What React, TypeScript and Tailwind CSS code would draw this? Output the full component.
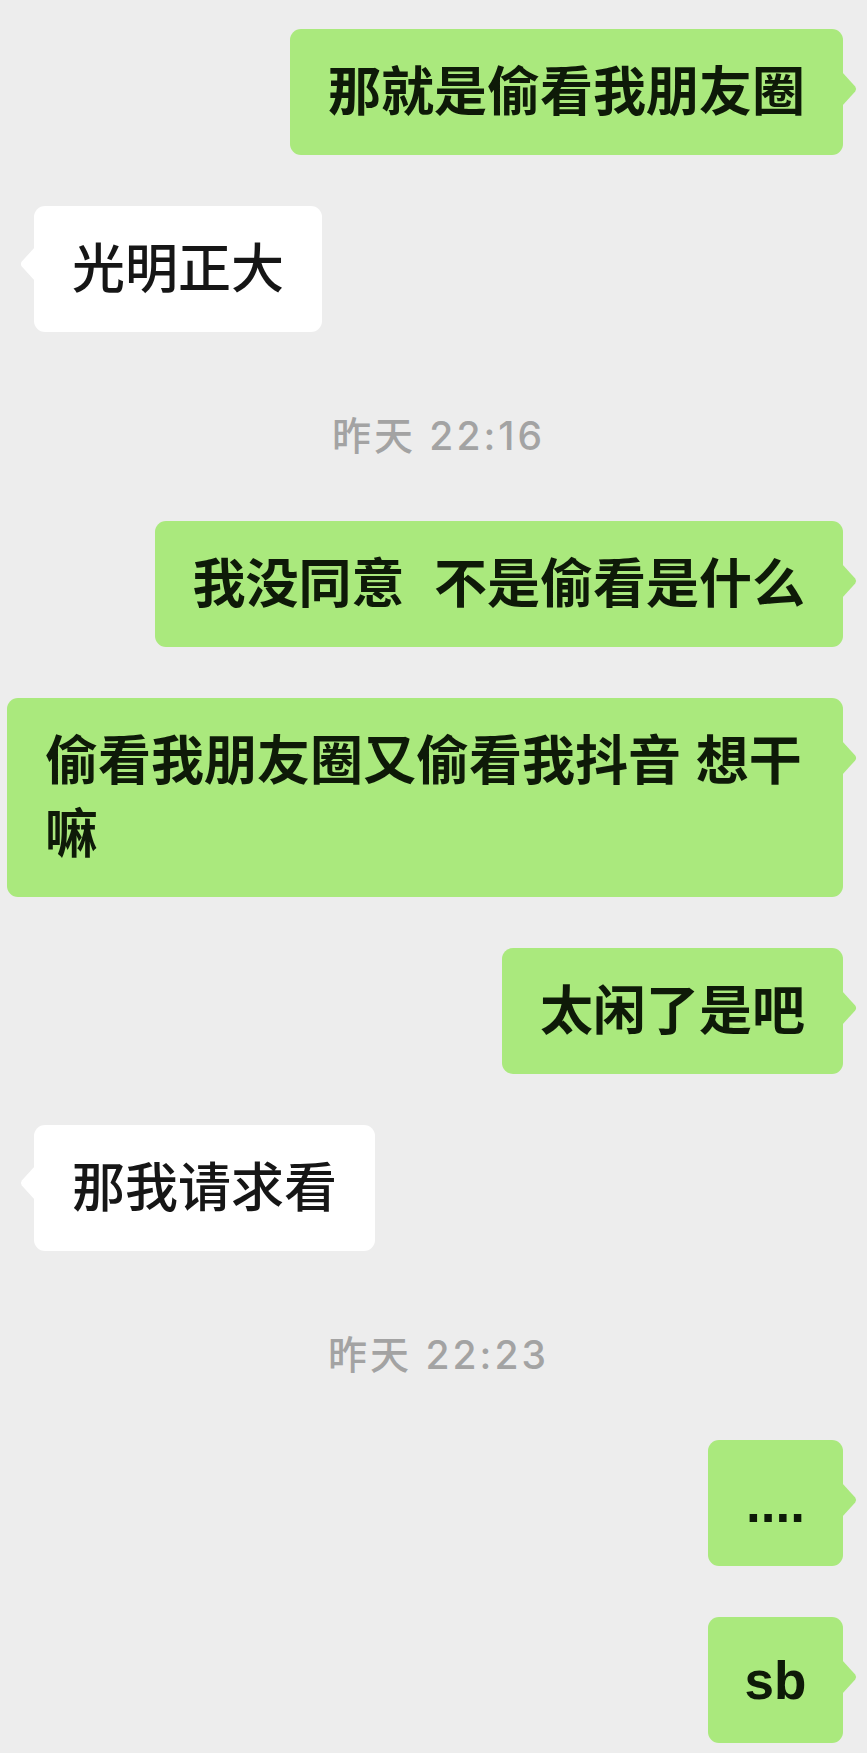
import React from "react";

type Msg =
  | { kind: "time"; text: string }
  | { kind: "in" | "out"; text: string; compact?: boolean };

const messages: Msg[] = [
  { kind: "out", text: "那就是偷看我朋友圈" },
  { kind: "in", text: "光明正大" },
  { kind: "time", text: "昨天 22:16" },
  { kind: "out", text: "我没同意\u00a0\u00a0不是偷看是什么" },
  { kind: "out", text: "偷看我朋友圈又偷看我抖音 想干嘛" },
  { kind: "out", text: "太闲了是吧" },
  { kind: "in", text: "那我请求看" },
  { kind: "time", text: "昨天 22:23" },
  { kind: "out", text: "....", compact: true },
  { kind: "out", text: "sb", compact: true },
];

const BODY_FONT = {
  fontFamily: '"Liberation Sans", "Noto Sans CJK SC", sans-serif',
};

const TIME_FONT = {
  fontFamily: 'Inter, "Noto Sans CJK SC", sans-serif',
};

function TailRight() {
  return (
    <svg
      className="absolute top-[43px] left-full -ml-px"
      width="16"
      height="34"
      viewBox="0 0 16 34"
    >
      <path d="M0 0 L13.2 14.6 Q15 17 13.2 19.4 L0 34 Z" fill="#aae97d" />
    </svg>
  );
}

function TailLeft() {
  return (
    <svg
      className="absolute top-[41px] right-full -mr-px"
      width="17"
      height="34"
      viewBox="0 0 17 34"
    >
      <path d="M17 0 L3.8 14.6 Q2 17 3.8 19.4 L17 34 Z" fill="#ffffff" />
    </svg>
  );
}

function Bubble({ msg }: { msg: Extract<Msg, { kind: "in" | "out" }> }) {
  const out = msg.kind === "out";
  return (
    <div className={out ? "flex justify-end pr-[24px]" : "flex justify-start pl-[34px]"}>
      <div
        className={
          "relative max-w-[836px] rounded-[11px] pt-[27px] pb-[26px] text-[53px] leading-[73px] break-all " +
          (out ? "bg-[#aae97d] text-[#0e1a08] font-semibold" : "bg-white text-[#161616] font-medium") +
          (msg.compact ? " min-w-[135px] px-[36px] text-center" : " px-[38px]")
        }
        style={BODY_FONT}
      >
        {msg.text}
        {out ? <TailRight /> : <TailLeft />}
      </div>
    </div>
  );
}

function TimeStamp({ text }: { text: string }) {
  return (
    <div
      className="flex justify-center pt-[33px] pb-[14px] pl-[10px] text-[39px] leading-[40px] font-medium text-[#a3a3a3] tracking-[3px]"
      style={TIME_FONT}
    >
      {text}
    </div>
  );
}

export default function App() {
  return (
    <div className="min-h-screen w-full bg-[#ededed] pt-[29px] pb-[10px]">
      <div className="flex flex-col gap-[51px]">
        {messages.map((m, i) =>
          m.kind === "time" ? (
            <TimeStamp key={i} text={m.text} />
          ) : (
            <Bubble key={i} msg={m} />
          )
        )}
      </div>
    </div>
  );
}
